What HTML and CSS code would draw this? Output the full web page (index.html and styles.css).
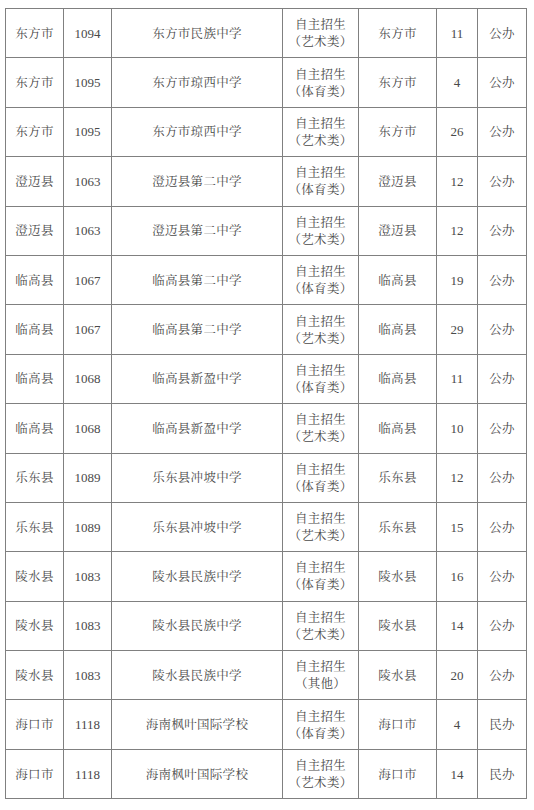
FILE: index.html
```html
<!DOCTYPE html>
<html lang="zh">
<head>
<meta charset="utf-8">
<link rel="stylesheet" href="styles.css">
</head>
<body>
<table class="tbl">
<colgroup>
<col class="c1"><col class="c2"><col class="c3"><col class="c4"><col class="c5"><col class="c6"><col class="c7">
</colgroup>
<tbody>
<tr><td>东方市</td><td class="num">1094</td><td>东方市民族中学</td><td>自主招生<br>（艺术类）</td><td>东方市</td><td class="num">11</td><td>公办</td></tr>
<tr><td>东方市</td><td class="num">1095</td><td>东方市琼西中学</td><td>自主招生<br>（体育类）</td><td>东方市</td><td class="num">4</td><td>公办</td></tr>
<tr><td>东方市</td><td class="num">1095</td><td>东方市琼西中学</td><td>自主招生<br>（艺术类）</td><td>东方市</td><td class="num">26</td><td>公办</td></tr>
<tr><td>澄迈县</td><td class="num">1063</td><td>澄迈县第二中学</td><td>自主招生<br>（体育类）</td><td>澄迈县</td><td class="num">12</td><td>公办</td></tr>
<tr><td>澄迈县</td><td class="num">1063</td><td>澄迈县第二中学</td><td>自主招生<br>（艺术类）</td><td>澄迈县</td><td class="num">12</td><td>公办</td></tr>
<tr><td>临高县</td><td class="num">1067</td><td>临高县第二中学</td><td>自主招生<br>（体育类）</td><td>临高县</td><td class="num">19</td><td>公办</td></tr>
<tr><td>临高县</td><td class="num">1067</td><td>临高县第二中学</td><td>自主招生<br>（艺术类）</td><td>临高县</td><td class="num">29</td><td>公办</td></tr>
<tr><td>临高县</td><td class="num">1068</td><td>临高县新盈中学</td><td>自主招生<br>（体育类）</td><td>临高县</td><td class="num">11</td><td>公办</td></tr>
<tr><td>临高县</td><td class="num">1068</td><td>临高县新盈中学</td><td>自主招生<br>（艺术类）</td><td>临高县</td><td class="num">10</td><td>公办</td></tr>
<tr><td>乐东县</td><td class="num">1089</td><td>乐东县冲坡中学</td><td>自主招生<br>（体育类）</td><td>乐东县</td><td class="num">12</td><td>公办</td></tr>
<tr><td>乐东县</td><td class="num">1089</td><td>乐东县冲坡中学</td><td>自主招生<br>（艺术类）</td><td>乐东县</td><td class="num">15</td><td>公办</td></tr>
<tr><td>陵水县</td><td class="num">1083</td><td>陵水县民族中学</td><td>自主招生<br>（体育类）</td><td>陵水县</td><td class="num">16</td><td>公办</td></tr>
<tr><td>陵水县</td><td class="num">1083</td><td>陵水县民族中学</td><td>自主招生<br>（艺术类）</td><td>陵水县</td><td class="num">14</td><td>公办</td></tr>
<tr><td>陵水县</td><td class="num">1083</td><td>陵水县民族中学</td><td>自主招生<br>（其他）</td><td>陵水县</td><td class="num">20</td><td>公办</td></tr>
<tr><td>海口市</td><td class="num">1118</td><td>海南枫叶国际学校</td><td>自主招生<br>（体育类）</td><td>海口市</td><td class="num">4</td><td>民办</td></tr>
<tr><td>海口市</td><td class="num">1118</td><td>海南枫叶国际学校</td><td>自主招生<br>（艺术类）</td><td>海口市</td><td class="num">14</td><td>民办</td></tr>
</tbody>
</table>
</body>
</html>
```
FILE: styles.css
```css
html, body {
  margin: 0;
  padding: 0;
  background: #ffffff;
}
body {
  padding: 8px 0 0 5px;
  font-family: "Noto Serif CJK SC", "AR PL UMing CN", "Liberation Serif", "Noto Sans CJK SC", serif;
  color: #4a4a4a;
}
.tbl {
  border-collapse: collapse;
  table-layout: fixed;
  width: 521px;
}
.c1 { width: 58px; }
.c2 { width: 48px; }
.c3 { width: 171px; }
.c4 { width: 76px; }
.c5 { width: 78px; }
.c6 { width: 41px; }
.c7 { width: 49px; }
.tbl td {
  border: 1px solid #808080;
  height: 48.4px;
  padding: 0;
  text-align: center;
  vertical-align: middle;
  font-size: 12.5px;
  line-height: 17px;
  letter-spacing: 0.3px;
}
.tbl td.num {
  font-family: "Liberation Serif", serif;
  font-size: 13px;
  letter-spacing: 0;
}
```
